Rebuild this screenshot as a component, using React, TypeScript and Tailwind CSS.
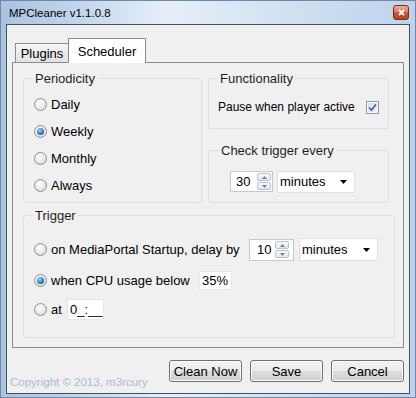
import React from "react";

const Radio = ({ checked }: { checked?: boolean }) => (
  <span className="flex h-[13px] w-[13px] shrink-0 items-center justify-center rounded-full border border-[#8e9094] bg-[radial-gradient(circle_at_40%_35%,#ffffff,#e8e8e8_55%,#cdcdcd)]">
    {checked && (
      <span className="h-[7px] w-[7px] rounded-full bg-[radial-gradient(circle_at_40%_35%,#a9d6f7,#2f78c0_55%,#0f3b6e)]" />
    )}
  </span>
);

const Spin = () => (
  <div className="flex h-[17px] w-[14px] flex-col gap-px">
    <div className="flex flex-1 items-center justify-center rounded-[2px] border border-[#b9c2cd] bg-gradient-to-b from-[#f8f9fb] to-[#dfe5ec]">
      <svg width="5" height="3" viewBox="0 0 5 3">
        <path d="M0 3 L2.5 0 L5 3 Z" fill="#6b84a5" />
      </svg>
    </div>
    <div className="flex flex-1 items-center justify-center rounded-[2px] border border-[#b9c2cd] bg-gradient-to-b from-[#f8f9fb] to-[#dfe5ec]">
      <svg width="5" height="3" viewBox="0 0 5 3">
        <path d="M0 0 L5 0 L2.5 3 Z" fill="#6b84a5" />
      </svg>
    </div>
  </div>
);

const DropArrow = () => (
  <svg width="7" height="4" viewBox="0 0 7 4">
    <path d="M0 0 L7 0 L3.5 4 Z" fill="#000" />
  </svg>
);

const Button = ({ label }: { label: string }) => (
  <button className="flex h-[22px] w-[73px] items-center justify-center rounded-[3px] border border-[#707070] bg-[linear-gradient(180deg,#f2f2f2_0%,#ebebeb_50%,#dddddd_51%,#cfcfcf_100%)] text-[13px] leading-none shadow-[inset_0_0_0_1px_#fcfcfc]">
    {label}
  </button>
);

export default function App() {
  return (
    <div className="h-[398px] w-[416px] overflow-hidden border border-[#7088a6] bg-[linear-gradient(90deg,#a9c3e0_0%,#c6d9ee_22%,#e8eff8_40%,#d7e5f4_60%,#bdd3eb_100%)] font-['Liberation_Sans',Arial,sans-serif] text-black">
      {/* title bar */}
      <div className="flex h-[23px]">
        <span className="ml-[8px] mt-[4px] text-[11.5px] leading-[16px]">MPCleaner v1.1.0.8</span>
        <div className="ml-auto mr-[6px] mt-[4px] flex h-[15px] w-[16px] items-center justify-center rounded-[3px] border border-[#7b2b19] bg-[linear-gradient(180deg,#eab2a2_0%,#d9795d_45%,#c5502f_55%,#b8461f_100%)]">
          <svg width="7" height="7" viewBox="0 0 7 7">
            <path d="M1 1 L6 6 M6 1 L1 6" stroke="#fff" strokeWidth="1.8" />
          </svg>
        </div>
      </div>

      {/* client area */}
      <div className="ml-[5px] flex h-[370px] w-[404px] flex-col border border-[#45515f] bg-[#f0f0f0]">
        {/* tabs */}
        <div className="ml-[8px] mt-[13px] flex h-[24px] items-end text-[13px]">
          <div className="flex h-[19px] w-[53px] items-center justify-center border-l border-t border-[#898c95] bg-gradient-to-b from-[#f4f4f4] to-[#e2e2e2] pt-px">
            Plugins
          </div>
          <div className="relative z-10 -mb-px flex h-[25px] w-[78px] items-start justify-center border border-b-0 border-[#898c95] bg-white pt-[3px]">
            Scheduler
          </div>
        </div>

        {/* tab page */}
        <div className="ml-[5px] flex h-[286px] w-[392px] flex-col border border-[#898c95] bg-[#f0f0f0] text-[13px]">
          <div className="ml-[10px] mt-[8px] flex">
            <fieldset className="h-[132px] w-[179px] rounded-[3px] border border-[#d5dfe5]">
              <legend className="ml-[9px] px-[2px] leading-[15px] text-[#1e1e1e]">Periodicity</legend>
              <div className="ml-[10px] flex flex-col pt-[5px]">
                <div className="flex h-[27px] items-center gap-[4px]">
                  <Radio />
                  <span>Daily</span>
                </div>
                <div className="flex h-[27px] items-center gap-[4px]">
                  <Radio checked />
                  <span>Weekly</span>
                </div>
                <div className="flex h-[27px] items-center gap-[4px]">
                  <Radio />
                  <span>Monthly</span>
                </div>
                <div className="flex h-[27px] items-center gap-[4px]">
                  <Radio />
                  <span>Always</span>
                </div>
              </div>
            </fieldset>

            <div className="ml-[6px] flex w-[181px] flex-col">
              <fieldset className="h-[58px] rounded-[3px] border border-[#d5dfe5]">
                <legend className="ml-[9px] px-[2px] leading-[15px] text-[#1e1e1e]">Functionality</legend>
                <div className="ml-[9px] mt-[13px] flex h-[16px] items-center">
                  <span className="w-[148px] text-[12px]">Pause when player active</span>
                  <span className="flex h-[13px] w-[13px] items-center justify-center border border-[#8e9aab] bg-[linear-gradient(135deg,#d4dfec,#f3f6fa)] shadow-[inset_0_0_0_1px_#f6f8fb]">
                    <svg width="9" height="9" viewBox="0 0 9 9">
                      <path d="M1 4.5 L3.5 7.2 L8 1.2" stroke="#4c62a0" strokeWidth="1.7" fill="none" />
                    </svg>
                  </span>
                </div>
              </fieldset>

              <fieldset className="mt-[14px] h-[60px] rounded-[3px] border border-[#d5dfe5]">
                <legend className="ml-[10px] px-[2px] leading-[15px] text-[#1e1e1e]">Check trigger every</legend>
                <div className="ml-[21px] mt-[13px] flex items-start gap-[4px]">
                  <div className="flex h-[21px] w-[43px] items-center justify-between border border-[#c3c9d0] bg-white pl-[5px] pr-px">
                    <span>30</span>
                    <Spin />
                  </div>
                  <div className="flex h-[22px] w-[78px] items-center justify-between border border-[#e0e0e0] bg-white pl-[2px] pr-[7px]">
                    <span>minutes</span>
                    <DropArrow />
                  </div>
                </div>
              </fieldset>
            </div>
          </div>

          <fieldset className="ml-[10px] mt-[5px] h-[130px] w-[372px] rounded-[3px] border border-[#d5dfe5]">
            <legend className="ml-[9px] px-[2px] leading-[15px] text-[#1e1e1e]">Trigger</legend>
            <div className="ml-[10px] flex flex-col">
              <div className="mt-[15px] flex h-[23px] items-center">
                <Radio />
                <span className="ml-[4px] w-[198px]">on MediaPortal Startup, delay by</span>
                <div className="flex h-[22px] w-[45px] items-center justify-between border border-[#c3c9d0] bg-white pl-[7px] pr-[4px]">
                  <span>10</span>
                  <Spin />
                </div>
                <div className="ml-[5px] flex h-[23px] w-[79px] items-center justify-between border border-[#e0e0e0] bg-white pl-[2px] pr-[7px]">
                  <span>minutes</span>
                  <DropArrow />
                </div>
              </div>
              <div className="mt-[10px] flex h-[19px] items-center">
                <Radio checked />
                <span className="ml-[4px] w-[148px]">when CPU usage below</span>
                <div className="flex h-[19px] w-[33px] items-center border border-[#e6e6e6] bg-white pl-[2px]">35%</div>
              </div>
              <div className="mt-[9px] flex h-[21px] items-center">
                <Radio />
                <span className="ml-[4px] w-[16px]">at</span>
                <div className="flex h-[21px] w-[37px] items-center border border-[#e6e6e6] bg-white pl-[2px]">0_:__</div>
              </div>
            </div>
          </fieldset>
        </div>

        {/* bottom */}
        <div className="mt-[12px] flex items-start">
          <span className="ml-[3px] mt-[15px] text-[11.5px] leading-[14px] text-[#a7bad2]">Copyright © 2013, m3rcury</span>
          <div className="ml-auto mr-[5px] flex gap-[8px]">
            <Button label="Clean Now" />
            <Button label="Save" />
            <Button label="Cancel" />
          </div>
        </div>
      </div>
    </div>
  );
}
